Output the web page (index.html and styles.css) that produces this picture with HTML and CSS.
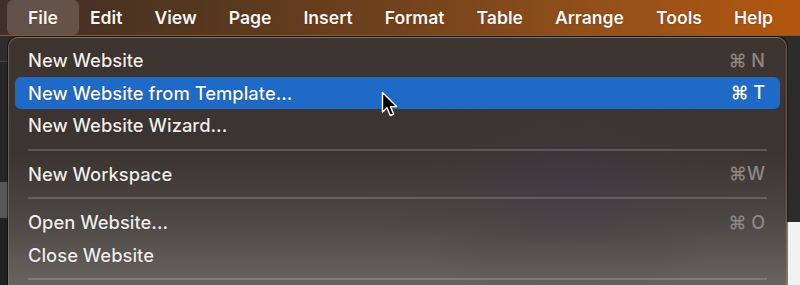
FILE: index.html
```html
<!DOCTYPE html>
<html>
<head>
<meta charset="utf-8">
<link rel="stylesheet" href="styles.css">
</head>
<body>
<div class="screen">
  <nav class="menubar">
    <span class="mb-item active">File</span>
    <span class="mb-item">Edit</span>
    <span class="mb-item">View</span>
    <span class="mb-item">Page</span>
    <span class="mb-item">Insert</span>
    <span class="mb-item">Format</span>
    <span class="mb-item">Table</span>
    <span class="mb-item">Arrange</span>
    <span class="mb-item">Tools</span>
    <span class="mb-item">Help</span>
  </nav>
  <div class="app">
    <div class="side-left">
      <div class="sl-top"></div>
      <div class="sl-mid"></div>
      <div class="sl-block"></div>
      <div class="sl-rest"></div>
    </div>
    <div class="canvas"></div>
    <div class="side-right">
      <div class="sr-dark"></div>
      <div class="sr-white"></div>
    </div>
  </div>
  <div class="menu">
    <div class="row"><span class="label">New Website</span><span class="key">⌘ N</span></div>
    <div class="row selected"><span class="label">New Website from Template...</span><span class="key">⌘ T</span></div>
    <div class="row"><span class="label">New Website Wizard...</span></div>
    <div class="sep"></div>
    <div class="row"><span class="label">New Workspace</span><span class="key">⌘W</span></div>
    <div class="sep"></div>
    <div class="row"><span class="label">Open Website...</span><span class="key">⌘ O</span></div>
    <div class="row"><span class="label">Close Website</span></div>
    <div class="sep"></div>
  </div>
  <svg class="cursor" width="20" height="28" viewBox="0 0 20 28">
    <path d="M1.5 1.5 L1.5 21 L6 16.8 L9.3 24.5 L12.6 23.1 L9.4 15.6 L15.6 15.6 Z" fill="#000" stroke="#fff" stroke-width="1.4" stroke-linejoin="round"/>
  </svg>
</div>
</body>
</html>
```
FILE: styles.css
```css
* { box-sizing: border-box; }
html, body { margin: 0; padding: 0; }
body {
  width: 800px;
  height: 285px;
  overflow: hidden;
  background: #2b2928;
  font-family: "Inter", "DejaVu Sans", sans-serif;
}
.screen {
  position: relative;
  width: 800px;
  height: 285px;
  display: flex;
  flex-direction: column;
}
.menubar {
  height: 36px;
  flex: none;
  display: flex;
  align-items: stretch;
  padding-left: 12px;
  background: linear-gradient(90deg, #3f2f27 0%, #55371f 25%, #72421c 50%, #93501a 75%, #b3570f 100%);
  border-bottom: 1px solid #8a5a30;
}
.mb-item {
  display: flex;
  align-items: center;
  padding: 0 16px 1px;
  color: #fbf8f6;
  font-size: 17.6px;
  font-weight: 600;
  text-shadow: 0 0 1px rgba(40, 10, 0, 0.7);
}
.mb-item.active {
  padding: 0 21px 1px;
  margin: 0 -5px;
  background: rgba(255, 255, 255, 0.17);
  border-radius: 6px;
}
.app {
  flex: 1;
  display: flex;
}
.side-left {
  width: 8px;
  display: flex;
  flex-direction: column;
}
.sl-top { height: 26px; background: #2f2c2a; border-bottom: 1px solid #4a4644; }
.sl-mid { height: 120px; background: #292726; }
.sl-block { height: 36px; background: #57575a; }
.sl-rest { flex: 1; background: #232222; }
.canvas { flex: 1; background: #2b2928; }
.side-right {
  width: 14px;
  display: flex;
  flex-direction: column;
}
.sr-dark { height: 186px; background: #2d2c2b; }
.sr-white { flex: 1; background: #f1f1f1; }
.menu {
  position: absolute;
  left: 8px;
  top: 37px;
  width: 779px;
  height: 262px;
  padding: 6px 6px 0;
  border-radius: 10px;
  border: 1px solid rgba(140, 130, 125, 0.55);
  background:
    radial-gradient(ellipse 300px 160px at 560px 150px, rgba(60, 60, 75, 0.45), rgba(60, 60, 75, 0) 70%),
    linear-gradient(180deg, #3e3531 0%, #3c3431 45%, #4d4844 70%, #645e5a 90%, #6d6763 100%);
  box-shadow: 0 0 0 1px rgba(0, 0, 0, 0.5);
}
.row {
  height: 32.5px;
  display: flex;
  align-items: center;
  justify-content: space-between;
  padding: 0 15px 0 13px;
  border-radius: 6px;
  color: #f2eeec;
  font-size: 18.4px;
  font-weight: 500;
  text-shadow: 0 0 1px rgba(0, 0, 0, 0.6);
}
.row.selected {
  background: #1f6ac6;
  color: #ffffff;
}
.key {
  color: #8d8884;
  font-size: 18px;
  font-weight: 500;
  text-shadow: none;
}
.row.selected .key { color: #ffffff; }
.sep {
  height: 16px;
  margin: 0 13px 0 13px;
  display: flex;
  align-items: center;
}
.sep::before {
  content: "";
  display: block;
  width: 100%;
  height: 2px;
  background: rgba(255, 255, 255, 0.17);
}
.cursor {
  position: absolute;
  left: 381px;
  top: 91px;
}
```
